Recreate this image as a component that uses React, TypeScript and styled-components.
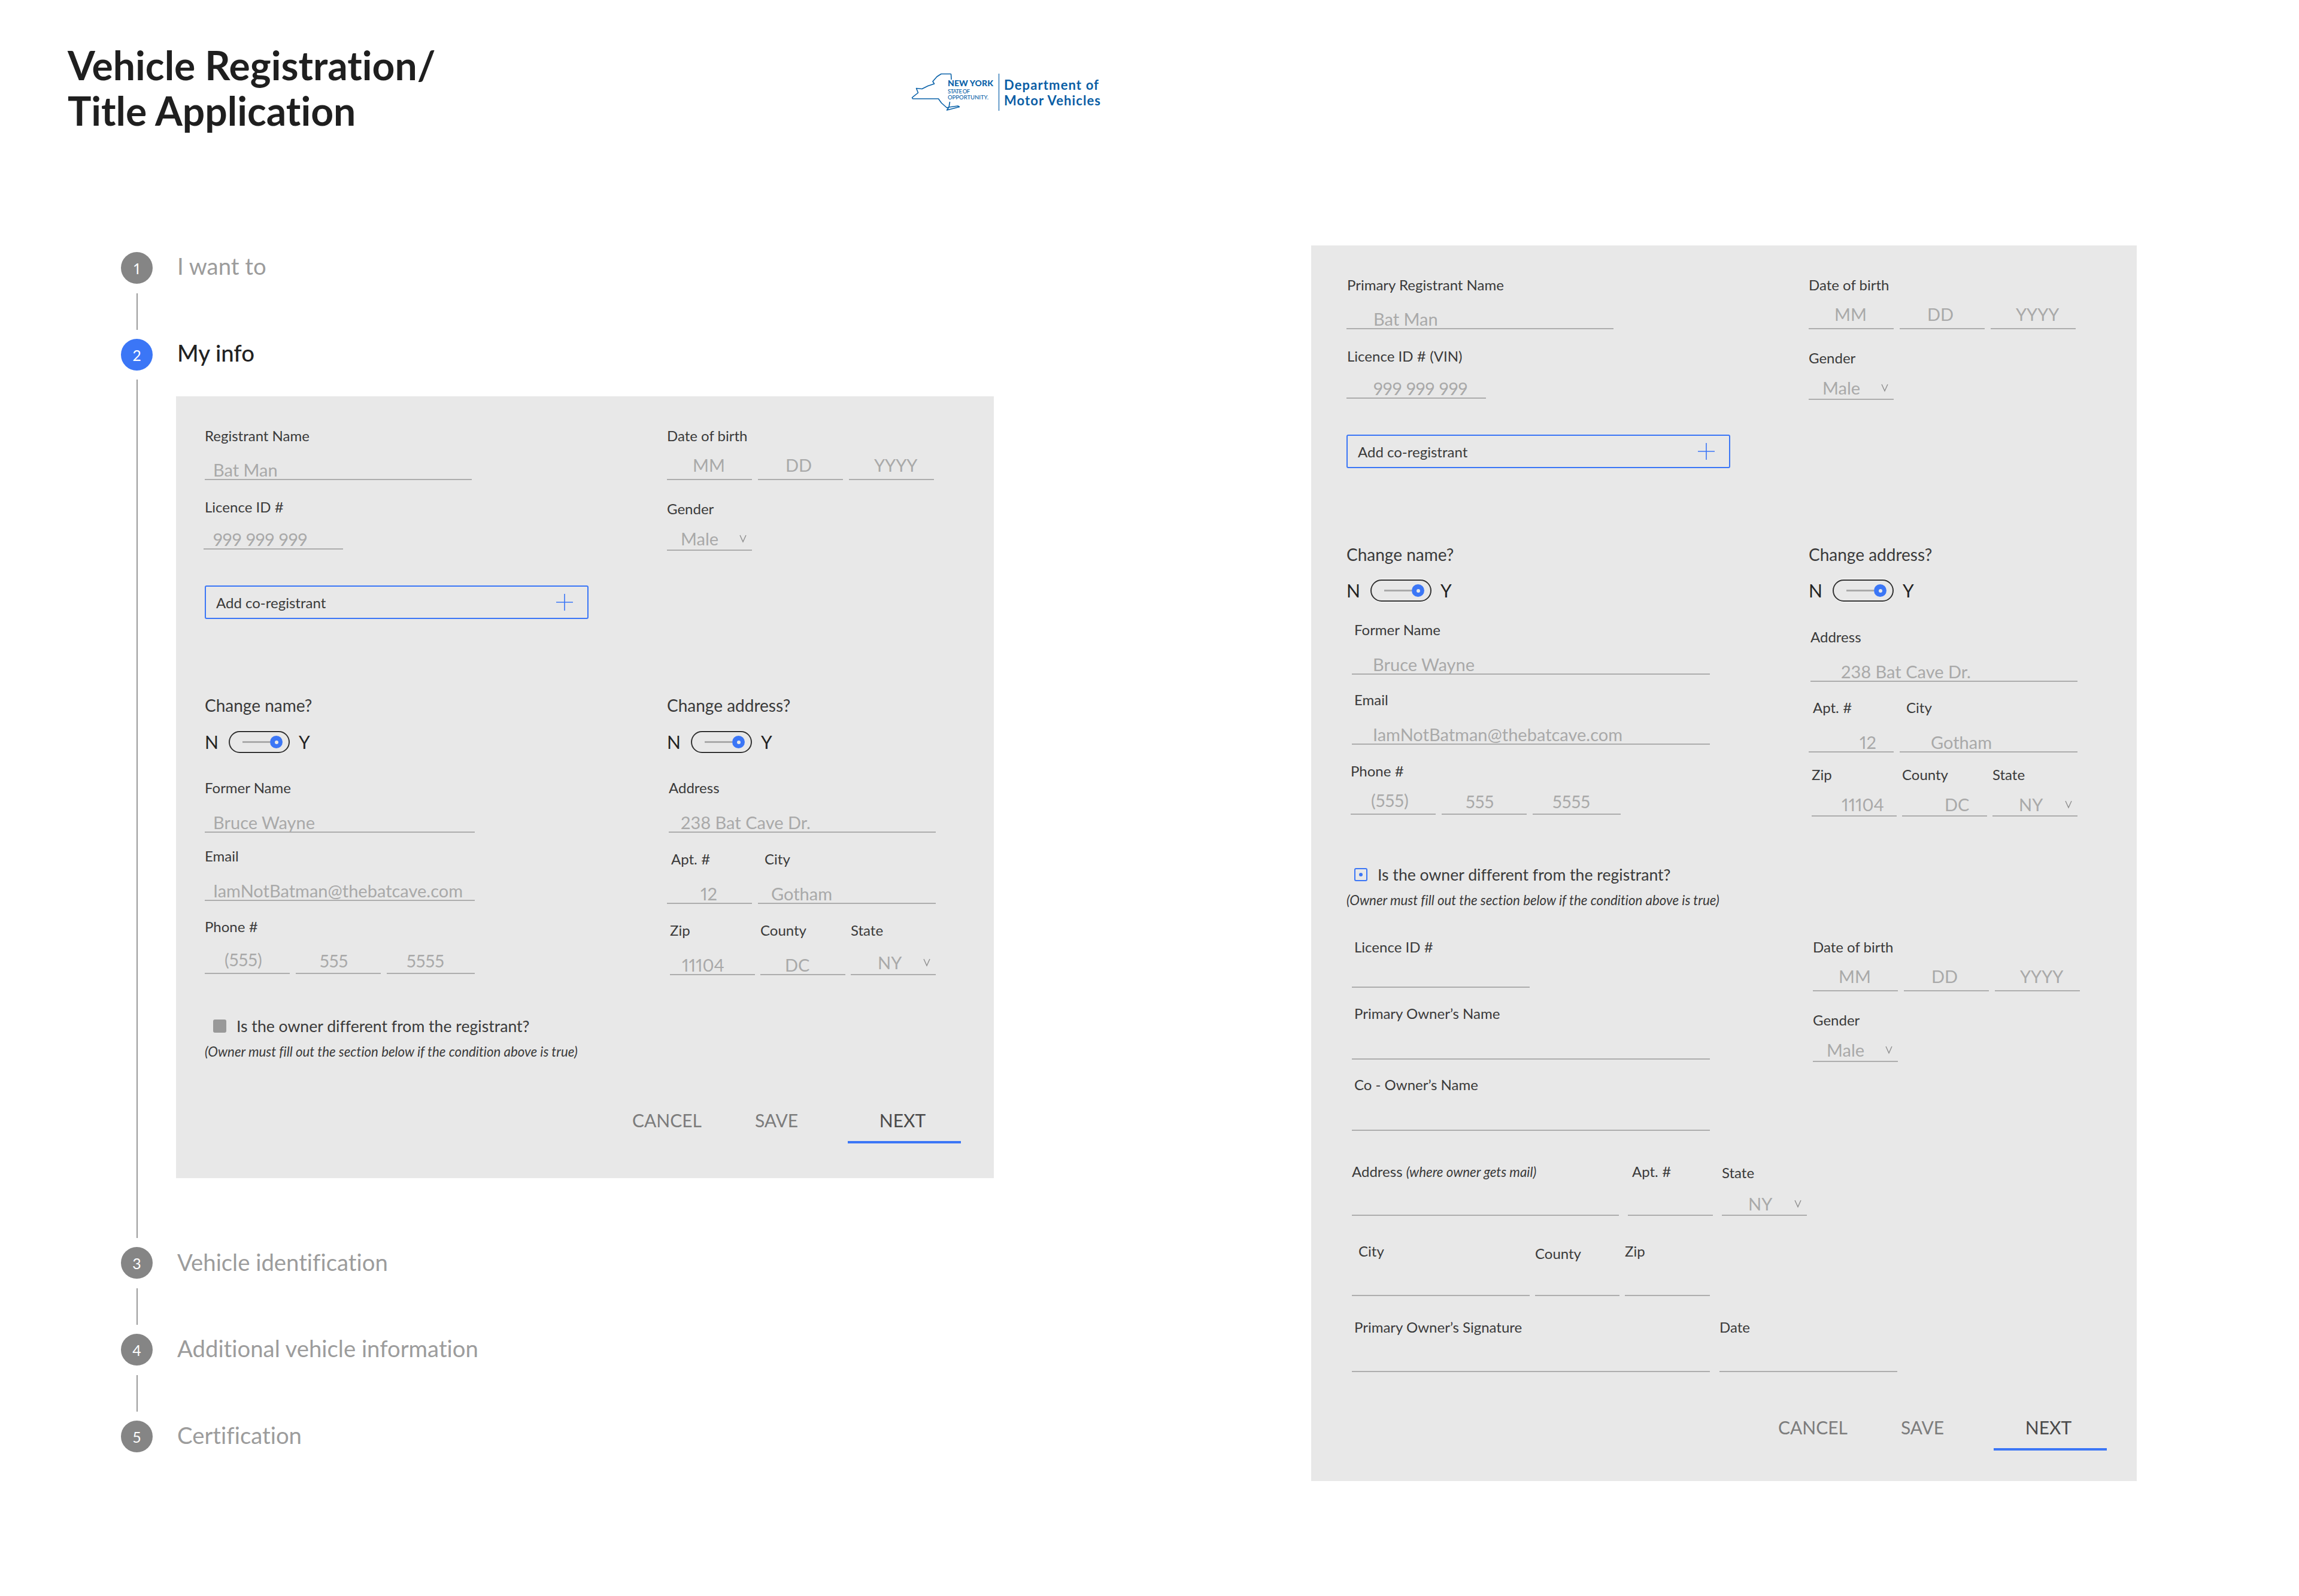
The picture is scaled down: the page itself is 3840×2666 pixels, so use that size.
import React from 'react';
import styled, { createGlobalStyle } from 'styled-components';

const BLUE = '#3b76f6';

const GlobalStyle = createGlobalStyle`
  html, body {
    margin: 0;
    padding: 0;
    background: #fff;
  }
  body {
    font-family: Lato, "Open Sans", sans-serif;
    font-variant-ligatures: none;
    font-variant-numeric: proportional-nums;
    color: #2a2a2a;
  }
  * {
    box-sizing: border-box;
  }
`;

const Page = styled.div`
  width: 3840px;
  height: 2666px;
  padding-top: 71px;
  overflow: hidden;
`;

const Header = styled.header`
  display: flex;
  align-items: flex-start;
  padding-left: 113px;
`;

const Title = styled.h1`
  width: 1377px;
  margin: 0;
  font-size: 66px;
  line-height: 76px;
  font-weight: 700;
  color: #1f1f1f;
`;

const LogoSvg = styled.svg`
  margin-top: 29px;
  flex: none;
`;

const Main = styled.main`
  display: flex;
  align-items: flex-start;
  margin-top: 187px;
  padding-left: 202px;
`;

const Stepper = styled.div`
  width: 1988px;
  padding-top: 11px;
`;

const StepRow = styled.div`
  height: 53px;
  display: flex;
  align-items: center;
  gap: 41px;
`;

const Circle = styled.div<{ $active?: boolean }>`
  width: 53px;
  height: 53px;
  border-radius: 50%;
  flex: none;
  display: flex;
  align-items: center;
  justify-content: center;
  font-size: 25px;
  color: #fff;
  background: ${p => (p.$active ? BLUE : '#858585')};
`;

const StepName = styled.div<{ $active?: boolean; $raise: number }>`
  padding-bottom: ${p => p.$raise}px;
  font-size: 38.300px;
  line-height: 48px;
  font-weight: ${p => (p.$active ? 500 : 400)};
  color: ${p => (p.$active ? '#222' : '#9c9c9c')};
`;

const Connector = styled.div`
  width: 2px;
  height: 61px;
  margin: 16px 0 15px 26px;
  background: #9a9a9a;
`;

const StepBody = styled.div`
  display: flex;
  gap: 39px;
  margin: 15px 0;
`;

const Rail = styled.div`
  width: 53px;
  flex: none;
  display: flex;
  justify-content: center;
  &::before {
    content: '';
    width: 2px;
    background: #9a9a9a;
  }
`;

const Panel = styled.section<{ $w: number; $h: number; $left: number }>`
  width: ${p => p.$w}px;
  height: ${p => p.$h}px;
  flex: none;
  padding: 51px 0 0 ${p => p.$left}px;
  background: #e8e8e8;
`;

const FirstPanel = styled(Panel)`
  margin: 28px 0 100px;
`;

const Columns = styled.div`
  display: grid;
  grid-template-columns: 772px 1fr;
`;

const Column = styled.div`
  display: flex;
  flex-direction: column;
  align-items: flex-start;
`;

const Row = styled.div<{ $top?: number; $left?: number; $gap?: number }>`
  display: flex;
  gap: ${p => p.$gap ?? 10}px;
  margin-top: ${p => p.$top ?? 0}px;
  margin-left: ${p => p.$left ?? 0}px;
`;

const CellBox = styled.div<{ $w: number }>`
  width: ${p => p.$w}px;
  flex: none;
`;

const Label = styled.div<{ $indent?: number; $drop?: number }>`
  height: 30px;
  padding-left: ${p => p.$indent ?? 0}px;
  font-size: 24px;
  line-height: ${p => 30 + 2 * (p.$drop ?? 0)}px;
  color: #3a3a3a;
  white-space: nowrap;
`;

const Hint = styled.em`
  font-size: 22.300px;
`;

const Input = styled.div<{ $h: number; $pad?: number; $lift?: number }>`
  height: ${p => p.$h}px;
  display: flex;
  align-items: flex-end;
  justify-content: space-between;
  padding: 0 9px ${p => p.$lift ?? 0}px ${p => p.$pad ?? 0}px;
  border-bottom: 2px solid #adadad;
`;

const Value = styled.span`
  font-size: 29px;
  line-height: 30px;
  color: #a9a9a9;
  white-space: nowrap;
`;

const ChevronIcon = styled.svg`
  margin-bottom: 8px;
  flex: none;
`;

const AddButton = styled.div<{ $top: number }>`
  width: 641px;
  height: 56px;
  margin-top: ${p => p.$top}px;
  padding: 0 24px 0 17px;
  display: flex;
  align-items: center;
  justify-content: space-between;
  border: 2px solid ${BLUE};
  border-radius: 3px;
  font-size: 24px;
  color: #3a3a3a;
`;

const Question = styled.div<{ $top: number }>`
  margin-top: ${p => p.$top}px;
  font-size: 28px;
  line-height: 36px;
  color: #3a3a3a;
`;

const ToggleRow = styled.div<{ $top: number }>`
  display: flex;
  align-items: center;
  margin-top: ${p => p.$top}px;
  font-size: 30px;
  line-height: 37px;
  color: #222;
`;

const ToggleMark = styled.span`
  width: 40px;
`;

const Switch = styled.div`
  width: 102px;
  height: 37px;
  margin-right: 15px;
  padding-left: 21px;
  display: flex;
  align-items: center;
  border: 2px solid #333;
  border-radius: 19px;
  box-shadow: 0 1px 0 #fff, 0 -1px 0 #fff;
`;

const Track = styled.div`
  width: 46px;
  height: 3px;
  background: #aaa;
`;

const Knob = styled.div`
  width: 21px;
  height: 21px;
  border-radius: 50%;
  flex: none;
  display: flex;
  align-items: center;
  justify-content: center;
  background: ${BLUE};
  &::after {
    content: '';
    width: 6px;
    height: 6px;
    border-radius: 50%;
    background: #e8e8e8;
  }
`;

const CheckRow = styled.div<{ $top: number; $left: number }>`
  display: flex;
  align-items: center;
  gap: 17px;
  margin-top: ${p => p.$top}px;
  margin-left: ${p => p.$left}px;
  font-size: 26.600px;
  line-height: 30px;
  color: #3a3a3a;
`;

const CheckBox = styled.div<{ $checked?: boolean }>`
  width: 22px;
  height: 22px;
  border-radius: 3px;
  display: flex;
  align-items: center;
  justify-content: center;
  background: ${p => (p.$checked ? 'transparent' : '#999')};
  border: ${p => (p.$checked ? `2px solid ${BLUE}` : 'none')};
  &::after {
    content: '';
    width: 6px;
    height: 6px;
    border-radius: 50%;
    background: ${p => (p.$checked ? BLUE : 'transparent')};
  }
`;

const Note = styled.div`
  margin-top: 15px;
  font-size: 22.300px;
  line-height: 26px;
  font-style: italic;
  color: #3a3a3a;
  white-space: nowrap;
`;

const Footer = styled.div<{ $top: number; $right: number }>`
  display: flex;
  justify-content: flex-end;
  margin-top: ${p => p.$top}px;
  padding-right: ${p => p.$right}px;
`;

const Action = styled.div<{ $w: number }>`
  width: ${p => p.$w}px;
  font-size: 30px;
  line-height: 36px;
  color: #7c7c7c;
  text-align: center;
`;

const NextAction = styled(Action)`
  height: 57px;
  margin-left: 26px;
  padding-right: 6px;
  color: #4a4a4a;
  border-bottom: 4px solid ${BLUE};
`;

const Chevron = () => (
  <ChevronIcon width="12" height="14" viewBox="0 0 12 14">
    <path d="M1 1 L6 12 L11 1" fill="none" stroke="#8f8f8f" strokeWidth="1.4" />
  </ChevronIcon>
);

const Plus = () => (
  <svg width="28" height="28" viewBox="0 0 28 28">
    <path d="M14 0 V28 M0 14 H28" stroke={BLUE} strokeWidth="1.6" fill="none" />
  </svg>
);

const Logo = () => (
  <LogoSvg width="400" height="120" viewBox="0 0 400 120">
    <path
      d="M98.500 23.500 L82 23.500 L75 28 L68 36 L70.500 40 L60 43.500 L50 48.500 L40.500 47.500 L43.500 55 L33.500 63 L34.500 65 L77.500 65 L82.500 72 L91.500 80 L95 79 L96.500 70 M91.500 84 L112.500 78.500 L110 77 L95 79 L91.500 84 Z M98.500 23.500 L99 33"
      fill="none"
      stroke="#0a62a9"
      strokeWidth="1.600"
      strokeLinejoin="round"
    />
    <text x="93" y="44" fontFamily="Lato" fontWeight="900" fontSize="14" fill="#0a62a9" textLength="76">NEW YORK</text>
    <text x="93" y="56" fontFamily="Lato" fontWeight="500" fontSize="9.500" fill="#0a62a9" textLength="37">STATE OF</text>
    <text x="93" y="66" fontFamily="Lato" fontWeight="500" fontSize="9.500" fill="#0a62a9" textLength="68">OPPORTUNITY.</text>
    <path d="M178.500 23 V85" stroke="#0a62a9" strokeWidth="1.200" />
    <text x="187" y="50" fontFamily="Lato" fontWeight="700" fontSize="22" fill="#0a5ea5" textLength="158">Department of</text>
    <text x="187" y="76" fontFamily="Lato" fontWeight="700" fontSize="22" fill="#0a5ea5" textLength="161">Motor Vehicles</text>
  </LogoSvg>
);

interface CellProps {
  w: number;
  h: number;
  label?: React.ReactNode;
  indent?: number;
  drop?: number;
  value?: string;
  pad?: number;
  lift?: number;
  select?: boolean;
}

const Cell = ({ w, h, label, indent, drop, value, pad, lift, select }: CellProps) => (
  <CellBox $w={w}>
    <Label $indent={indent} $drop={drop}>{label}</Label>
    <Input $h={h} $pad={pad} $lift={lift}>
      {value && <Value>{value}</Value>}
      {select && <Chevron />}
    </Input>
  </CellBox>
);

const DateOfBirth = ({ top, left }: { top?: number; left?: number }) => (
  <Row $top={top} $left={left}>
    <Cell w={142} h={59} label="Date of birth" value="MM" pad={43} lift={8} />
    <Cell w={142} h={59} value="DD" pad={46} lift={8} />
    <Cell w={142} h={59} value="YYYY" pad={42} lift={8} />
  </Row>
);

const Gender = ({ left }: { left?: number }) => (
  <Row $top={33} $left={left}>
    <Cell w={142} h={55} label="Gender" value="Male" pad={23} lift={3} select />
  </Row>
);

const Toggle = ({ top }: { top: number }) => (
  <ToggleRow $top={top}>
    <ToggleMark>N</ToggleMark>
    <Switch>
      <Track />
      <Knob />
    </Switch>
    <span>Y</span>
  </ToggleRow>
);

const Actions = ({ top, right }: { top: number; right: number }) => (
  <Footer $top={top} $right={right}>
    <Action $w={180}>CANCEL</Action>
    <Action $w={186}>SAVE</Action>
    <NextAction $w={189}>NEXT</NextAction>
  </Footer>
);

const NOTE = '(Owner must fill out the section below if the condition above is true)';
const QUESTION = 'Is the owner different from the registrant?';

const MyInfoForm = () => (
  <FirstPanel $w={1366} $h={1306} $left={48}>
    <Columns>
      <Column>
        <Row>
          <Cell w={446} h={59} label="Registrant Name" value="Bat Man" pad={14} />
        </Row>
        <Row $top={30} $left={-2}>
          <Cell w={233} h={56} label="Licence ID #" indent={2} value="999 999 999" pad={16} />
        </Row>
        <AddButton $top={60}>
          Add co-registrant
          <Plus />
        </AddButton>
        <Question $top={126}>Change name?</Question>
        <Toggle top={25} />
        <Row $top={43}>
          <Cell w={451} h={60} label="Former Name" value="Bruce Wayne" pad={14} />
        </Row>
        <Row $top={24}>
          <Cell w={451} h={60} label="Email" value="IamNotBatman@thebatcave.com" pad={14} />
        </Row>
        <Row $top={28}>
          <Cell w={142} h={64} label="Phone #" value="(555)" pad={33} lift={7} />
          <Cell w={142} h={64} value="555" pad={40} lift={5} />
          <Cell w={147} h={64} value="5555" pad={33} lift={5} />
        </Row>
        <CheckRow $top={72} $left={14}>
          <CheckBox />
          {QUESTION}
        </CheckRow>
        <Note>{NOTE}</Note>
      </Column>
      <Column>
        <DateOfBirth />
        <Gender />
        <Question $top={240}>Change address?</Question>
        <Toggle top={25} />
        <Row $top={43} $left={3}>
          <Cell w={446} h={60} label="Address" value="238 Bat Cave Dr." pad={20} />
        </Row>
        <Row $top={29}>
          <Cell w={142} h={60} label="Apt. #" indent={7} value="12" pad={56} />
          <Cell w={297} h={60} label="City" indent={11} value="Gotham" pad={22} />
        </Row>
        <Row $top={29} $left={5} $gap={9}>
          <Cell w={142} h={60} label="Zip" value="11104" pad={20} />
          <Cell w={142} h={60} label="County" value="DC" pad={41} />
          <Cell w={142} h={60} label="State" value="NY" pad={45} lift={4} select />
        </Row>
      </Column>
    </Columns>
    <Actions top={83} right={55} />
  </FirstPanel>
);

const OwnerForm = () => (
  <Panel $w={1379} $h={2064} $left={59}>
    <Columns>
      <Column>
        <Row>
          <Cell w={446} h={59} label="Primary Registrant Name" indent={1} value="Bat Man" pad={45} />
        </Row>
        <Row $top={30}>
          <Cell w={233} h={56} label="Licence ID # (VIN)" indent={1} value="999 999 999" pad={45} />
        </Row>
        <AddButton $top={60}>
          Add co-registrant
          <Plus />
        </AddButton>
        <Question $top={126}>Change name?</Question>
        <Toggle top={24} />
        <Row $top={32} $left={9}>
          <Cell w={598} h={60} label="Former Name" indent={4} value="Bruce Wayne" pad={35} />
        </Row>
        <Row $top={27} $left={9}>
          <Cell w={598} h={60} label="Email" indent={4} value="IamNotBatman@thebatcave.com" pad={35} />
        </Row>
        <Row $top={29} $left={7}>
          <Cell w={142} h={58} label="Phone #" value="(555)" pad={34} lift={7} />
          <Cell w={142} h={58} value="555" pad={40} lift={5} />
          <Cell w={147} h={58} value="5555" pad={33} lift={5} />
        </Row>
        <CheckRow $top={85} $left={13}>
          <CheckBox $checked />
          {QUESTION}
        </CheckRow>
        <Note>{NOTE}</Note>
        <Row $top={50} $left={9}>
          <Cell w={297} h={53} label="Licence ID #" indent={4} />
        </Row>
        <Row $top={28} $left={9}>
          <Cell w={598} h={62} label="Primary Owner’s Name" indent={4} />
        </Row>
        <Row $top={27} $left={9}>
          <Cell w={598} h={62} label="Co - Owner’s Name" indent={4} />
        </Row>
      </Column>
      <Column>
        <DateOfBirth />
        <Gender />
        <Question $top={240}>Change address?</Question>
        <Toggle top={24} />
        <Row $top={44} $left={3}>
          <Cell w={446} h={60} label="Address" value="238 Bat Cave Dr." pad={51} />
        </Row>
        <Row $top={28}>
          <Cell w={142} h={60} label="Apt. #" indent={7} value="12" pad={85} />
          <Cell w={297} h={60} label="City" indent={11} value="Gotham" pad={52} />
        </Row>
        <Row $top={22} $left={5} $gap={9}>
          <Cell w={142} h={55} label="Zip" value="11104" pad={50} lift={3} />
          <Cell w={142} h={55} label="County" value="DC" pad={71} lift={3} />
          <Cell w={142} h={55} label="State" value="NY" pad={44} lift={3} select />
        </Row>
        <DateOfBirth top={203} left={7} />
        <Gender left={7} />
      </Column>
    </Columns>
    <Row $top={53} $left={9} $gap={15}>
      <Cell w={446} h={59} label={<>Address <Hint>(where owner gets mail)</Hint></>} />
      <Cell w={142} h={59} label="Apt. #" indent={7} />
      <Cell w={142} h={59} label="State" drop={2} value="NY" pad={44} lift={3} select />
    </Row>
    <Row $top={44} $left={9} $gap={9}>
      <Cell w={297} h={60} label="City" indent={11} />
      <Cell w={141} h={60} label="County" drop={4} />
      <Cell w={142} h={60} label="Zip" />
    </Row>
    <Row $top={37} $left={9} $gap={16}>
      <Cell w={598} h={60} label="Primary Owner’s Signature" indent={4} />
      <Cell w={297} h={60} label="Date" />
    </Row>
    <Actions top={74} right={50} />
  </Panel>
);

interface StepProps {
  n: number;
  name: string;
  raise: number;
  active?: boolean;
}

const Step = ({ n, name, raise, active }: StepProps) => (
  <StepRow>
    <Circle $active={active}>{n}</Circle>
    <StepName $active={active} $raise={raise}>{name}</StepName>
  </StepRow>
);

export default function App() {
  return (
    <Page>
      <GlobalStyle />
      <Header>
        <Title>
          Vehicle Registration/
          <br />
          Title Application
        </Title>
        <Logo />
      </Header>
      <Main>
        <Stepper>
          <Step n={1} name="I want to" raise={8} />
          <Connector />
          <Step n={2} name="My info" raise={8} active />
          <StepBody>
            <Rail />
            <MyInfoForm />
          </StepBody>
          <Step n={3} name="Vehicle identification" raise={3} />
          <Connector />
          <Step n={4} name="Additional vehicle information" raise={5} />
          <Connector />
          <Step n={5} name="Certification" raise={6} />
        </Stepper>
        <OwnerForm />
      </Main>
    </Page>
  );
}
